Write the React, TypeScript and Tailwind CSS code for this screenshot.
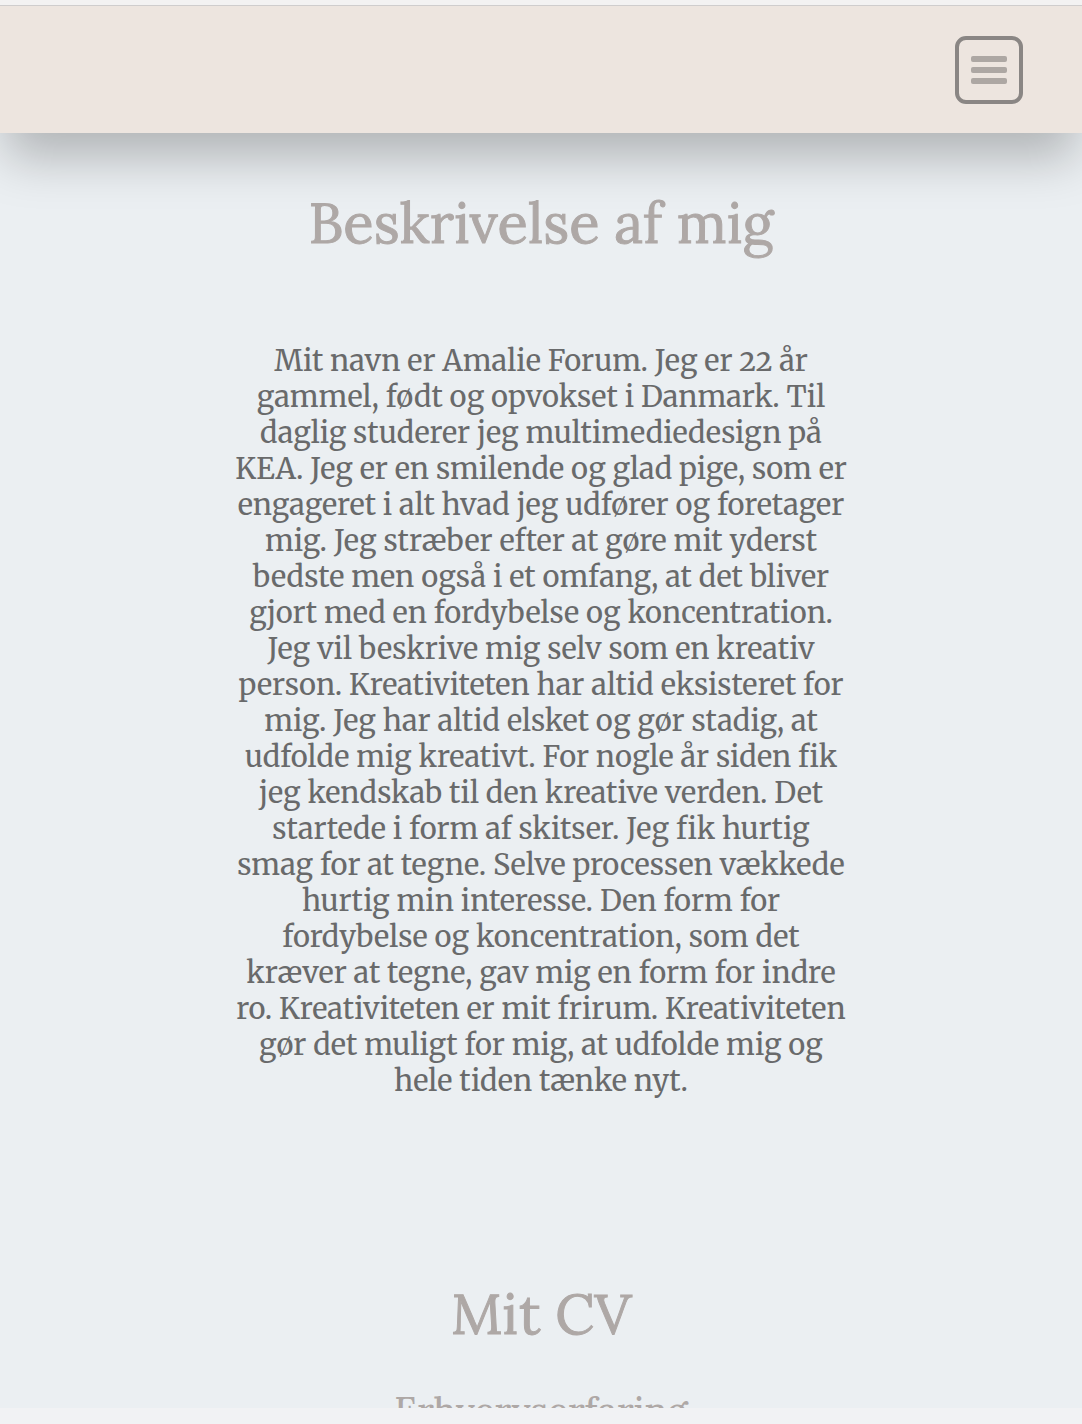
const lines = [
  'Mit navn er Amalie Forum. Jeg er 22 år',
  'gammel, født og opvokset i Danmark. Til',
  'daglig studerer jeg multimediedesign på',
  'KEA. Jeg er en smilende og glad pige, som er',
  'engageret i alt hvad jeg udfører og foretager',
  'mig. Jeg stræber efter at gøre mit yderst',
  'bedste men også i et omfang, at det bliver',
  'gjort med en fordybelse og koncentration.',
  'Jeg vil beskrive mig selv som en kreativ',
  'person. Kreativiteten har altid eksisteret for',
  'mig. Jeg har altid elsket og gør stadig, at',
  'udfolde mig kreativt. For nogle år siden fik',
  'jeg kendskab til den kreative verden. Det',
  'startede i form af skitser. Jeg fik hurtig',
  'smag for at tegne. Selve processen vækkede',
  'hurtig min interesse. Den form for',
  'fordybelse og koncentration, som det',
  'kræver at tegne, gav mig en form for indre',
  'ro. Kreativiteten er mit frirum. Kreativiteten',
  'gør det muligt for mig, at udfolde mig og',
  'hele tiden tænke nyt.',
];

function Header() {
  return (
    <header className="relative z-10 flex h-[127px] shrink-0 items-center justify-end bg-[#ede5df] px-[59px] shadow-[0_30px_50px_-6px_rgba(0,0,0,0.25)]">
      <button
        type="button"
        aria-label="Menu"
        className="flex size-[68px] flex-col items-center justify-center gap-[5px] rounded-[11px] border-4 border-[#8a8684]"
      >
        <span className="h-1.5 w-9 rounded-[2px] bg-[#ada7a3]" />
        <span className="h-1.5 w-9 rounded-[2px] bg-[#ada7a3]" />
        <span className="h-1.5 w-9 rounded-[2px] bg-[#ada7a3]" />
      </button>
    </header>
  );
}

export default function App() {
  return (
    <div className="flex h-screen flex-col bg-[#f1f2f4] font-['Lora','Liberation_Serif',serif]">
      <div className="relative z-20 h-1.5 shrink-0 border-b border-[#cfcdcd] bg-[#f3f2f2]" />
      <Header />
      <main className="mb-4 min-h-0 flex-1 overflow-hidden bg-[#ebeff2] text-center text-[#aea8a6]">
        <section className="pt-[52px]">
          <h1 className="text-[56px] leading-[76px] [-webkit-text-stroke:1px_#aea8a6]">Beskrivelse af mig</h1>
          <p className="mt-[82px] text-[29px] leading-9 whitespace-nowrap oldstyle-nums text-[#696a6b] font-['Merriweather','Liberation_Serif',serif]">
            {lines.map((line) => (
              <span key={line} className="block">
                {line}
              </span>
            ))}
          </p>
        </section>
        <section className="pt-[177px]">
          <h2 className="text-[56px] leading-[76px] [-webkit-text-stroke:1px_#aea8a6]">Mit CV</h2>
          <h3 className="mt-8 text-[37px] leading-[52px] font-medium">Erhvervserfaring</h3>
        </section>
      </main>
    </div>
  );
}
